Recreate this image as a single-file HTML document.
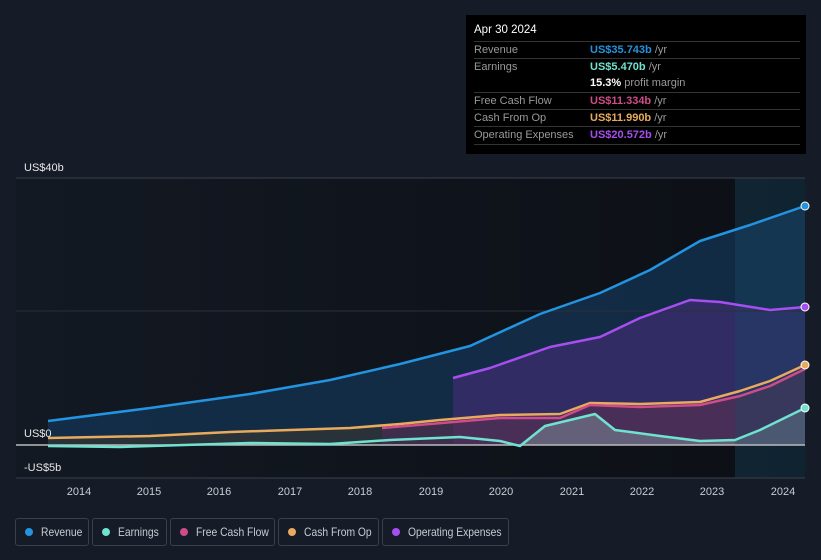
<!DOCTYPE html>
<html><head><style>
html,body{margin:0;width:821px;height:560px;overflow:hidden}
body{background:#151b27;font-family:"Liberation Sans",sans-serif;position:relative}
.tt{position:absolute;left:466px;top:15px;width:340px;height:139px;background:#000;font-size:11px;color:#999}
.tt .h{position:absolute;left:8px;top:9px;color:#fff;font-size:11.5px}
.row{position:absolute;left:8px;width:326px;border-top:1px solid #333;height:17px;line-height:17px}
.row span{position:absolute;left:116px}
.lg{position:absolute;top:518px;height:28px;border:1px solid #3a404b;border-radius:3px;color:#c8ccd2;font-size:12px;line-height:26px;box-sizing:border-box;padding-left:25px;white-space:nowrap}
.lg span{display:inline-block;transform:scaleX(.86);transform-origin:left}
.lg i{position:absolute;left:9px;top:9px;width:8px;height:8px;border-radius:50%}
</style></head><body>
<svg width="821" height="560" style="position:absolute;left:0;top:0">
<defs><linearGradient id="g" x1="0" x2="1"><stop offset="0" stop-color="#131923"/><stop offset="1" stop-color="#0c0f15"/></linearGradient></defs>
<rect x="16" y="178" width="789" height="300" fill="url(#g)"/>
<path d="M48,421 L150,408 L250,394 L330,380 L400,364 L470,346 L540,314 L600,293 L650,270 L700,241 L750,225 L805,206 L805,445 L48,445Z" fill="#14304d" opacity="0.85"/>
<path d="M453,378 L490,368 L550,347 L600,337 L640,318 L690,300 L720,302 L770,310 L805,307 L805,445 L453,445Z" fill="#3a2d6b" opacity="0.8"/>
<path d="M382,428 L430,424 L500,418 L560,418 L590,405 L640,407 L700,405 L740,396 L770,386 L805,369 L805,445 L382,445Z" fill="#5a3050" opacity="0.6"/>
<path d="M48,438 L150,436 L230,432 L290,430 L350,428 L382,424 L382,445 L48,445Z" fill="#2e3535" opacity="0.8"/>
<path d="M520,446 L545,426 L595,414 L615,430 L660,436 L700,441 L735,440 L760,430 L805,408 L805,445 L520,445Z" fill="#7a8a95" opacity="0.55"/>
<rect x="735" y="178" width="70" height="300" fill="#1a4a66" opacity="0.35"/>
<line x1="16" y1="178" x2="805" y2="178" stroke="#3a404b"/>
<line x1="16" y1="311" x2="805" y2="311" stroke="#2a303a"/>
<line x1="16" y1="478" x2="805" y2="478" stroke="#3a404b"/>
<line x1="16" y1="445" x2="805" y2="445" stroke="#bbb" stroke-width="1.5"/>
<g fill="none" stroke-width="2.5" stroke-linejoin="round">
<path d="M48,446 L120,447 L250,443 L330,444 L390,440 L460,437 L500,441 L520,446 L545,426 L595,414 L615,430 L660,436 L700,441 L735,440 L760,430 L805,408" stroke="#6fe2d0"/>
<path d="M48,438 L150,436 L230,432 L290,430 L350,428 L400,424 L440,420 L500,415 L560,414 L590,403 L640,404 L700,402 L740,391 L770,381 L805,365" stroke="#e8aa5c"/>
<path d="M382,428 L430,424 L500,418 L560,418 L590,405 L640,407 L700,405 L740,396 L770,386 L805,369" stroke="#cf4c88"/>
<path d="M453,378 L490,368 L550,347 L600,337 L640,318 L690,300 L720,302 L770,310 L805,307" stroke="#a74ef0"/>
<path d="M48,421 L150,408 L250,394 L330,380 L400,364 L470,346 L540,314 L600,293 L650,270 L700,241 L750,225 L805,206" stroke="#2394e0"/>
</g>
<circle cx="805" cy="206" r="4" fill="#2394e0" stroke="#fff"/>
<circle cx="805" cy="307" r="4" fill="#a74ef0" stroke="#fff"/>
<circle cx="805" cy="365" r="4" fill="#e8aa5c" stroke="#fff"/>
<circle cx="805" cy="408" r="4" fill="#6fe2d0" stroke="#fff"/>
<g fill="#e6e6e6" font-size="11" font-family="Liberation Sans">
<text x="24" y="171">US$40b</text><text x="24" y="437">US$0</text><text x="24" y="471">-US$5b</text>
</g>
<g fill="#c8ccd2" font-size="11" font-family="Liberation Sans" text-anchor="middle">
<text x="79" y="495">2014</text><text x="149" y="495">2015</text><text x="219" y="495">2016</text><text x="290" y="495">2017</text><text x="360" y="495">2018</text><text x="431" y="495">2019</text><text x="501" y="495">2020</text><text x="572" y="495">2021</text><text x="642" y="495">2022</text><text x="712" y="495">2023</text><text x="783" y="495">2024</text>
</g>
</svg>
<div class="tt"><div class="h">Apr 30 2024</div>
<div class="row" style="top:26px">Revenue<span><b style="color:#2394e0">US$35.743b</b> /yr</span></div>
<div class="row" style="top:43px">Earnings<span><b style="color:#6fe2d0">US$5.470b</b> /yr</span></div>
<div class="row" style="top:60px;border:0"><span><b style="color:#fff">15.3%</b> profit margin</span></div>
<div class="row" style="top:77px">Free Cash Flow<span><b style="color:#cf4c88">US$11.334b</b> /yr</span></div>
<div class="row" style="top:94px">Cash From Op<span><b style="color:#e8aa5c">US$11.990b</b> /yr</span></div>
<div class="row" style="top:111px;border-bottom:1px solid #333">Operating Expenses<span><b style="color:#a74ef0">US$20.572b</b> /yr</span></div>
</div>
<div class="lg" style="left:15px;width:74px"><i style="background:#2394e0"></i><span>Revenue</span></div>
<div class="lg" style="left:92px;width:75px"><i style="background:#6fe2d0"></i><span>Earnings</span></div>
<div class="lg" style="left:170px;width:105px"><i style="background:#cf4c88"></i><span>Free Cash Flow</span></div>
<div class="lg" style="left:278px;width:101px"><i style="background:#e8aa5c"></i><span>Cash From Op</span></div>
<div class="lg" style="left:382px;width:127px"><i style="background:#a74ef0"></i><span>Operating Expenses</span></div>
</body></html>
